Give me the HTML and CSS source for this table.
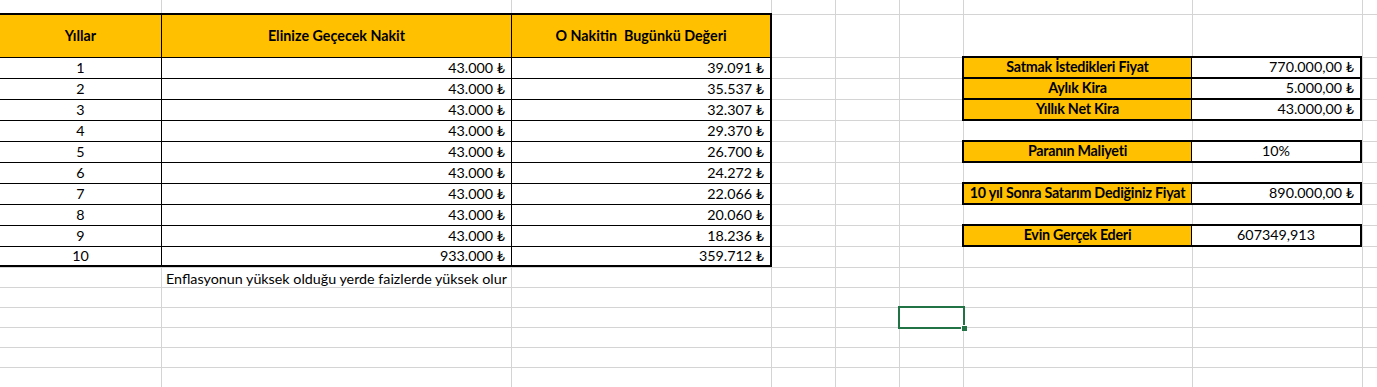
FILE: index.html
```html
<!DOCTYPE html>
<html lang="tr">
<head>
<meta charset="utf-8">
<title>Evin Gerçek Değeri</title>
<link rel="stylesheet" href="styles.css">
</head>
<body>
<div class="sheet">
  <div class="vl c1"></div><div class="vl c2"></div><div class="vl c3"></div><div class="vl c4"></div>
  <div class="vl c5"></div><div class="vl c6"></div><div class="vl c7"></div><div class="vl c8"></div>

  <div class="hl r1"></div><div class="hl r2"></div><div class="hl r3"></div><div class="hl r4"></div>
  <div class="hl r5"></div><div class="hl r6"></div><div class="hl r7"></div><div class="hl r8"></div>
  <div class="hl r9"></div><div class="hl r10"></div><div class="hl r11"></div><div class="hl r12"></div>
  <div class="hl r13"></div><div class="hl r14"></div><div class="hl r15"></div><div class="hl r16"></div>
  <div class="hl r17"></div>

  <div class="ltable">
    <div class="cell hd">Yıllar</div>
    <div class="cell hd">Elinize Geçecek Nakit</div>
    <div class="cell hd">O Nakitin&nbsp; Bugünkü Değeri</div>

    <div class="cell ctr">1</div><div class="cell num">43.000 ₺</div><div class="cell num">39.091 ₺</div>
    <div class="cell ctr">2</div><div class="cell num">43.000 ₺</div><div class="cell num">35.537 ₺</div>
    <div class="cell ctr">3</div><div class="cell num">43.000 ₺</div><div class="cell num">32.307 ₺</div>
    <div class="cell ctr">4</div><div class="cell num">43.000 ₺</div><div class="cell num">29.370 ₺</div>
    <div class="cell ctr">5</div><div class="cell num">43.000 ₺</div><div class="cell num">26.700 ₺</div>
    <div class="cell ctr">6</div><div class="cell num">43.000 ₺</div><div class="cell num">24.272 ₺</div>
    <div class="cell ctr">7</div><div class="cell num">43.000 ₺</div><div class="cell num">22.066 ₺</div>
    <div class="cell ctr">8</div><div class="cell num">43.000 ₺</div><div class="cell num">20.060 ₺</div>
    <div class="cell ctr">9</div><div class="cell num">43.000 ₺</div><div class="cell num">18.236 ₺</div>
    <div class="cell ctr">10</div><div class="cell num">933.000 ₺</div><div class="cell num">359.712 ₺</div>
  </div>

  <div class="rblock b1">
    <div class="cell lbl">Satmak İstedikleri Fiyat</div><div class="cell num">770.000,00 ₺</div>
    <div class="cell lbl">Aylık Kira</div><div class="cell num">5.000,00 ₺</div>
    <div class="cell lbl">Yıllık Net Kira</div><div class="cell num">43.000,00 ₺</div>
  </div>

  <div class="rblock b2">
    <div class="cell lbl">Paranın Maliyeti</div><div class="cell ctr">10%</div>
  </div>

  <div class="rblock b3">
    <div class="cell lbl">10 yıl Sonra Satarım Dediğiniz Fiyat</div><div class="cell num">890.000,00 ₺</div>
  </div>

  <div class="rblock b4">
    <div class="cell lbl">Evin Gerçek Ederi</div><div class="cell ctr">607349,913</div>
  </div>

  <div class="note">Enflasyonun yüksek olduğu yerde faizlerde yüksek olur</div>

  <div class="selected"><span class="handle"></span></div>
</div>
</body>
</html>
```

FILE: styles.css
```css
html, body {
  margin: 0;
  padding: 0;
  background: #fff;
  overflow: hidden;
}

.sheet {
  display: grid;
  grid-template-columns: 162px 350px 260px 64px 64px 64px 229px 170px 1fr;
  grid-template-rows: 15px 43px repeat(10, 21px) repeat(6, 20px);
  width: 1377px;
  height: 387px;
  overflow: hidden;
  font-family: "Lato", "Noto Sans", "DejaVu Sans", sans-serif;
  font-size: 14.3px;
  color: #000;
}

.vl { grid-row: 1 / -1; border-right: 1px solid #d4d4d4; }
.c1 { grid-column: 1; } .c2 { grid-column: 2; } .c3 { grid-column: 3; } .c4 { grid-column: 4; }
.c5 { grid-column: 5; } .c6 { grid-column: 6; } .c7 { grid-column: 7; } .c8 { grid-column: 8; }

.hl { grid-column: 1 / -1; border-bottom: 1px solid #d4d4d4; }
.r1 { grid-row: 1; } .r2 { grid-row: 2; } .r3 { grid-row: 3; } .r4 { grid-row: 4; }
.r5 { grid-row: 5; } .r6 { grid-row: 6; } .r7 { grid-row: 7; } .r8 { grid-row: 8; }
.r9 { grid-row: 9; } .r10 { grid-row: 10; } .r11 { grid-row: 11; } .r12 { grid-row: 12; }
.r13 { grid-row: 13; } .r14 { grid-row: 14; } .r15 { grid-row: 15; } .r16 { grid-row: 16; }
.r17 { grid-row: 17; }

.ltable {
  grid-column: 1 / 4;
  grid-row: 2 / 13;
  margin: -2px 0 1px 0;
  box-sizing: border-box;
  display: grid;
  grid-template-columns: 161px 349px 258px;
  grid-template-rows: 42px repeat(9, 20px) 18px;
  gap: 1px;
  background: #000;
  border: 2px solid #000;
  border-left: 0;
}

.cell {
  background: #fff;
  display: flex;
  align-items: center;
  white-space: nowrap;
  overflow: hidden;
  line-height: 1;
}

.hd {
  background: #ffc000;
  font-weight: 700;
  justify-content: center;
}

.ctr { justify-content: center; }

.num {
  justify-content: flex-end;
  padding-right: 6px;
}

.rblock {
  grid-column: 7 / 9;
  margin: -2px 1px 0 -2px;
  box-sizing: border-box;
  display: grid;
  grid-template-columns: 227px 168px;
  grid-auto-rows: 19px;
  column-gap: 1px;
  row-gap: 2px;
  background: #000;
  border: 2px solid #000;
  align-self: start;
}

.b1 { grid-row: 3 / 6; }
.b2 { grid-row: 7; }
.b3 { grid-row: 9; }
.b4 { grid-row: 11; }

.lbl {
  background: #ffc000;
  font-weight: 700;
  letter-spacing: -0.25px;
  justify-content: center;
}

.note {
  grid-column: 2 / 4;
  grid-row: 13;
  display: flex;
  align-items: center;
  padding-left: 4px;
  white-space: nowrap;
}

.selected {
  grid-column: 6;
  grid-row: 15;
  margin: -2px -1px -1px -2px;
  border: 2px solid #217346;
  position: relative;
}

.handle {
  position: absolute;
  right: -4px;
  bottom: -4px;
  width: 5px;
  height: 5px;
  background: #217346;
  border: 1px solid #fff;
  border-right: 0;
  border-bottom: 0;
}
```
